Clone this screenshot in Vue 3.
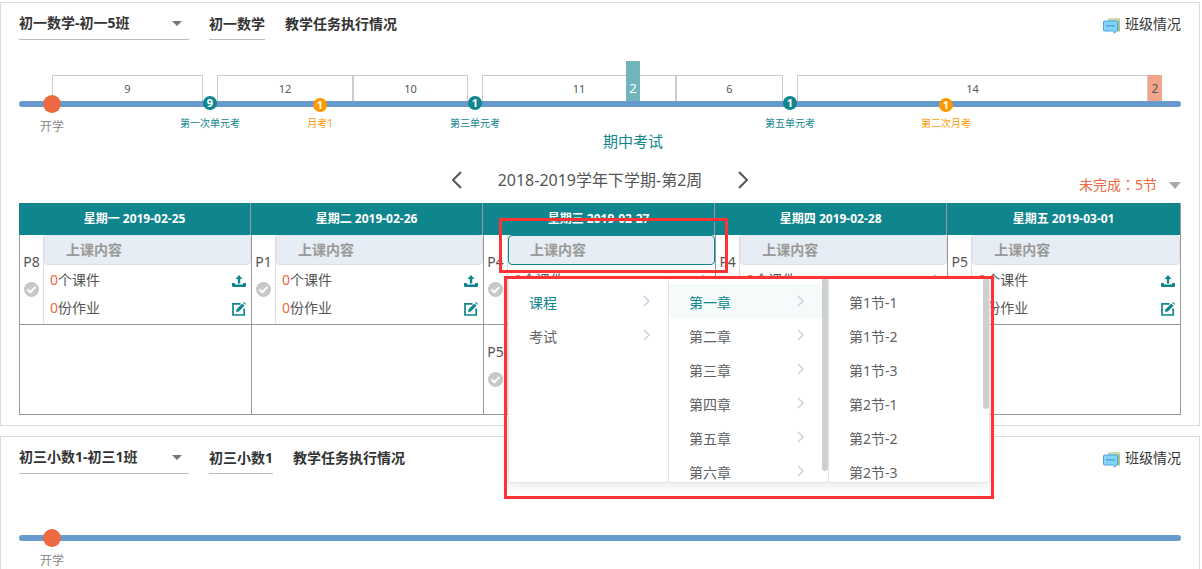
<script setup>
const TRACK = 1162
const pct = (n) => (n / TRACK) * 100 + '%'

const classes = [
  {
    id: 'a',
    name: '初一数学-初一5班',
    subject: '初一数学',
    segments: [
      { size: 33, type: 'gap' },
      { size: 151, type: 'box', text: '9' },
      { size: 14, type: 'gap' },
      { size: 136, type: 'box', text: '12' },
      { size: 115, type: 'box', text: '10' },
      { size: 14, type: 'gap' },
      { size: 194, type: 'box', text: '11' },
      { size: 107, type: 'box', text: '6' },
      { size: 14, type: 'gap' },
      { size: 351, type: 'box', text: '14' },
      { size: 14, type: 'final', text: '2' },
      { size: 19, type: 'gap' },
    ],
    midterm: { at: 614, count: '2', text: '期中考试' },
    markers: [
      { at: 191, count: '9', text: '第一次单元考', kind: 'unit' },
      { at: 301, count: '1', text: '月考1', kind: 'month' },
      { at: 456, count: '1', text: '第三单元考', kind: 'unit' },
      { at: 771, count: '1', text: '第五单元考', kind: 'unit' },
      { at: 927, count: '1', text: '第二次月考', kind: 'month' },
    ],
    schedule: true,
  },
  { id: 'b', name: '初三小数1-初三1班', subject: '初三小数1', segments: [], markers: [], schedule: false },
]

const days = ['星期一 2019-02-25', '星期二 2019-02-26', '星期三 2019-02-27', '星期四 2019-02-28', '星期五 2019-03-01']
const rows = [
  [{ p: 'P8' }, { p: 'P1' }, { p: 'P4', open: true }, { p: 'P4' }, { p: 'P5' }],
  [null, null, { p: 'P5' }, null, null],
]
const kinds = ['课程', '考试']
const chapters = ['第一章', '第二章', '第三章', '第四章', '第五章', '第六章']
const sections = ['第1节-1', '第1节-2', '第1节-3', '第2节-1', '第2节-2', '第2节-3']
</script>

<template>
  <main class="page">
    <section v-for="c in classes" :key="c.id" class="card">
      <header class="head">
        <div class="picker">
          <select :id="'class-' + c.id" aria-label="班级">
            <option>{{ c.name }}</option>
          </select>
          <svg class="caret" width="10" height="5" viewBox="0 0 10 5"><path d="M0 0h10L5 5z" fill="#757575" /></svg>
        </div>
        <span class="subject">{{ c.subject }}</span>
        <h2 class="title">教学任务执行情况</h2>
        <a class="status" href="#">
          <svg width="18" height="16" viewBox="0 0 18 16">
            <path d="M5.500 0.500h11.500v13h-3V3h-8.500z" fill="#a3c585" />
            <path d="M5.500 0.500h11.500v2H5.500z" fill="#c3dcae" />
            <path d="M1.500 3h12q1 0 1 1v8q0 1-1 1H13l-1.200 2.200-2.300-2.200h-8q-1 0-1-1V4q0-1 1-1z" fill="#82d5fa" stroke="#4f9fe6" />
            <path d="M3.500 7h2v1.500h-2zM6.500 7h2v1.500h-2zM9.500 7h2v1.500h-2z" fill="#4189cf" />
          </svg>
          班级情况
        </a>
      </header>

      <div class="timeline">
        <div class="segments">
          <div v-for="(s, i) in c.segments" :key="i" :class="['seg', s.type]" :style="{ width: pct(s.size) }">{{ s.text }}</div>
        </div>
        <div class="track"></div>
        <div class="start" :style="{ left: pct(33) }"><i class="start-dot"></i><span>开学</span></div>
        <div v-for="m in c.markers" :key="m.at" :class="['marker', m.kind]" :style="{ left: pct(m.at) }">
          <b class="badge">{{ m.count }}</b><span>{{ m.text }}</span>
        </div>
        <div v-if="c.midterm" class="midterm" :style="{ left: pct(c.midterm.at) }">
          <b class="midbar">{{ c.midterm.count }}</b><span>{{ c.midterm.text }}</span>
        </div>
      </div>

      <template v-if="c.schedule">
        <nav class="weeks">
          <button class="arrow" aria-label="上一周">
            <svg width="12" height="18" viewBox="0 0 12 18"><path d="M10 1L2 9l8 8" /></svg>
          </button>
          <span class="week">2018-2019学年下学期-第2周</span>
          <button class="arrow" aria-label="下一周">
            <svg width="12" height="18" viewBox="0 0 12 18"><path d="M2 1l8 8-8 8" /></svg>
          </button>
          <button class="undone">
            <span>未完成<span class="colon">：</span>5节</span>
            <svg width="12" height="7" viewBox="0 0 12 7"><path d="M0 0h12L6 7z" fill="#aaa" /></svg>
          </button>
        </nav>

        <table class="grid">
          <thead>
            <tr><th v-for="d in days" :key="d" scope="col">{{ d }}</th></tr>
          </thead>
          <tbody>
            <tr v-for="(row, r) in rows" :key="r">
              <td v-for="(cell, i) in row" :key="i">
                <div v-if="cell" class="lesson">
                  <div class="period">
                    <span>{{ cell.p }}</span>
                    <svg width="15" height="15" viewBox="0 0 15 15">
                      <circle cx="7.5" cy="7.5" r="7.5" fill="#c8c8c8" />
                      <path d="M3.5 7.5l2.8 2.8 5.2-5.4" fill="none" stroke="#fff" stroke-width="2" />
                    </svg>
                  </div>
                  <div class="detail">
                    <input :class="['content', { active: cell.open }]" type="text" placeholder="上课内容" aria-label="上课内容" />
                    <div class="lines">
                      <div class="line">
                        <span><em>0</em>个课件</span>
                        <button class="tool" aria-label="上传课件">
                          <svg width="14" height="14" viewBox="0 0 14 14">
                            <path d="M7 1l3.500 4H8.200v4.500H5.800V5H3.500z" fill="#0f858e" />
                            <path d="M0 9h2.500l1 1.500h7l1-1.500H14v3q0 1-1 1H1q-1 0-1-1z" fill="#0f858e" />
                          </svg>
                        </button>
                      </div>
                      <div v-if="!cell.open" class="line">
                        <span><em>0</em>份作业</span>
                        <button class="tool" aria-label="编辑作业">
                          <svg width="14" height="14" viewBox="0 0 14 14">
                            <path d="M8.500 1.800H1v11.200h11.200V6.500" fill="none" stroke="#0f858e" stroke-width="1.700" />
                            <path d="M4 10l.6-2.800L10.300 1.500l2.200 2.200L6.800 9.400z" fill="#0f858e" />
                            <path d="M11.200.8L12 0l2 2-.8.8z" fill="#0f858e" />
                          </svg>
                        </button>
                      </div>
                    </div>
                    <template v-if="cell.open">
                      <div class="cascader">
                        <ul class="menu">
                          <li v-for="(k, n) in kinds" :key="k" :class="{ chosen: n === 0 }">
                            <button><span>{{ k }}</span><svg width="8" height="12" viewBox="0 0 8 12"><path d="M1 1l5 5-5 5" /></svg></button>
                          </li>
                        </ul>
                        <ul class="menu scrolls">
                          <li v-for="(k, n) in chapters" :key="k" :class="{ chosen: n === 0, tinted: n === 0 }">
                            <button><span>{{ k }}</span><svg width="8" height="12" viewBox="0 0 8 12"><path d="M1 1l5 5-5 5" /></svg></button>
                          </li>
                          <li class="thumb long" aria-hidden="true"></li>
                        </ul>
                        <ul class="menu scrolls">
                          <li v-for="k in sections" :key="k"><button><span>{{ k }}</span></button></li>
                          <li class="thumb short" aria-hidden="true"></li>
                        </ul>
                      </div>
                      <div class="frame frame-input"></div>
                      <div class="frame frame-menu"></div>
                    </template>
                  </div>
                </div>
              </td>
            </tr>
          </tbody>
        </table>
      </template>
    </section>
  </main>
</template>

<style>
body { background: #fff; }
</style>

<style scoped>
* { box-sizing: border-box; }
.page {
  height: 100vh;
  overflow: hidden;
  padding: 2px 2px 0 0;
  font: 14px/20px "Noto Sans", "Noto Sans CJK SC", sans-serif;
  color: #333;
}
button, input, select { font: inherit; color: inherit; border: 0; background: none; padding: 0; margin: 0; }
button { cursor: pointer; }
svg { display: block; flex: none; }
.card { border: 1px solid #dcdcdc; padding: 0 18px 10px; margin-bottom: 10px; }
.head { display: flex; align-items: flex-end; gap: 20px; height: 37px; }
.picker { position: relative; width: 170px; border-bottom: 1px solid #bdbdbd; }
.picker select { display: block; width: 100%; height: 32px; appearance: none; font-weight: bold; outline: none; }
.caret { position: absolute; right: 7px; top: 14px; pointer-events: none; }
.subject { border-bottom: 1px solid #bdbdbd; height: 26px; font-weight: bold; }
.title { margin: 0; height: 26px; font-size: 14px; font-weight: bold; }
.status { display: flex; gap: 4px; align-items: flex-end; margin-left: auto; height: 20px; margin-bottom: 6px; color: #333; text-decoration: none; }

.timeline { position: relative; margin-top: 35px; height: 88px; }
.segments { display: flex; height: 26px; }
.seg { flex: none; text-align: center; font-size: 11px; line-height: 25px; color: #555; }
.seg.box { border: 1px solid #ccc; border-bottom: 0; }
.seg.final { background: #f2a58d; font-size: 12px; line-height: 27px; }
.track { height: 6px; border-radius: 3px; background: #6699cc; }
.start, .marker, .midterm { position: absolute; display: flex; flex-direction: column; align-items: center; transform: translateX(-50%); white-space: nowrap; }
.start { top: 20px; color: #888; font-size: 12px; gap: 4px; }
.start-dot { width: 18px; height: 18px; border-radius: 50%; background: #ec6941; }
.marker { top: 21px; font-size: 10px; line-height: 14px; color: #0f858e; }
.badge { width: 14px; height: 14px; border-radius: 50%; background: #0f858e; color: #fff; text-align: center; font-size: 11px; line-height: 14px; margin-bottom: 6px; }
.month { color: #f90; top: 23px; }
.month .badge { background: #f90; margin-bottom: 4px; }
.midterm { top: -14px; font-size: 15px; color: #0f858e; }
.midbar { width: 14px; height: 40px; padding-top: 17px; background: #6fb5bb; color: #fff; font-size: 13px; font-weight: normal; text-align: center; margin-bottom: 30px; }

.weeks { display: flex; justify-content: center; align-items: center; position: relative; height: 40px; padding-bottom: 6px; }
.week { font-size: 16px; margin: 0 35px; color: #555; }
.arrow path { fill: none; stroke: #555; stroke-width: 2; }
.undone { position: absolute; right: 0; top: 12px; display: flex; align-items: center; gap: 12px; color: #ec6941; }
.colon { font-family: "Noto Sans CJK TC", sans-serif; line-height: 1; }

.grid { width: 100%; table-layout: fixed; border-collapse: separate; border-spacing: 0; }
th { height: 32px; padding: 0; background: #0f858e; color: #fff; font-size: 12px; border-right: 1px solid #999; }
th:not(:last-child) { width: 19.97%; }
td { height: 90px; padding: 0; vertical-align: top; border-left: 1px solid #999; border-bottom: 1px solid #999; }
td:last-child { border-right: 1px solid #999; }
.lesson { display: flex; height: 89px; }
.period { width: 24px; border-right: 1px solid #ddd; display: flex; flex-direction: column; align-items: center; padding-top: 17px; gap: 10px; color: #555; }
.detail { position: relative; flex: 1; min-width: 0; }
.content { display: block; width: 100%; height: 30px; padding: 0 21px 2px; border: 1px solid #dcdfe6; border-radius: 4px; background: #e6edf4; font-weight: bold; outline: none; }
.content::placeholder { color: #999; opacity: 1; }
.content.active { border-color: #0f858e; }
.lines { padding: 1px 5px 0 6px; }
.line { display: flex; justify-content: space-between; height: 28px; padding-top: 4px; color: #555; }
.tool { height: 22px; }
em { font-style: normal; color: #ec6941; }

.cascader { position: absolute; z-index: 2; left: 0; top: 42px; display: flex; border: 1px solid #e4e7ed; background: #fff; box-shadow: 0 2px 12px rgba(0, 0, 0, 0.1); }
.menu { position: relative; width: 160px; height: 204px; margin: 0; padding: 6px 0; list-style: none; overflow: hidden; border-right: 1px solid #dfe4ed; }
.menu:last-child { border-right: 0; }
.scrolls { padding-right: 6px; }
.menu button { display: flex; justify-content: space-between; align-items: center; width: 100%; height: 34px; padding: 0 17px 0 20px; color: #606266; }
.menu button span { padding-top: 3px; }
.menu path { fill: none; stroke: #c5cbdc; stroke-width: 1.3; }
.chosen button { color: #0f858e; }
.tinted { background: #f5fafa; }
.thumb { position: absolute; right: 0; top: 0; width: 6px; border-radius: 3px; background: #cfcfcf; }
.long { height: 193px; }
.short { height: 131px; }
.frame { position: absolute; z-index: 3; border: 3px solid #f33; pointer-events: none; }
.frame-input { left: -9px; right: -13px; top: -17px; height: 55px; }
.frame-menu { left: -4px; top: 41px; width: 490px; height: 223px; }
</style>
